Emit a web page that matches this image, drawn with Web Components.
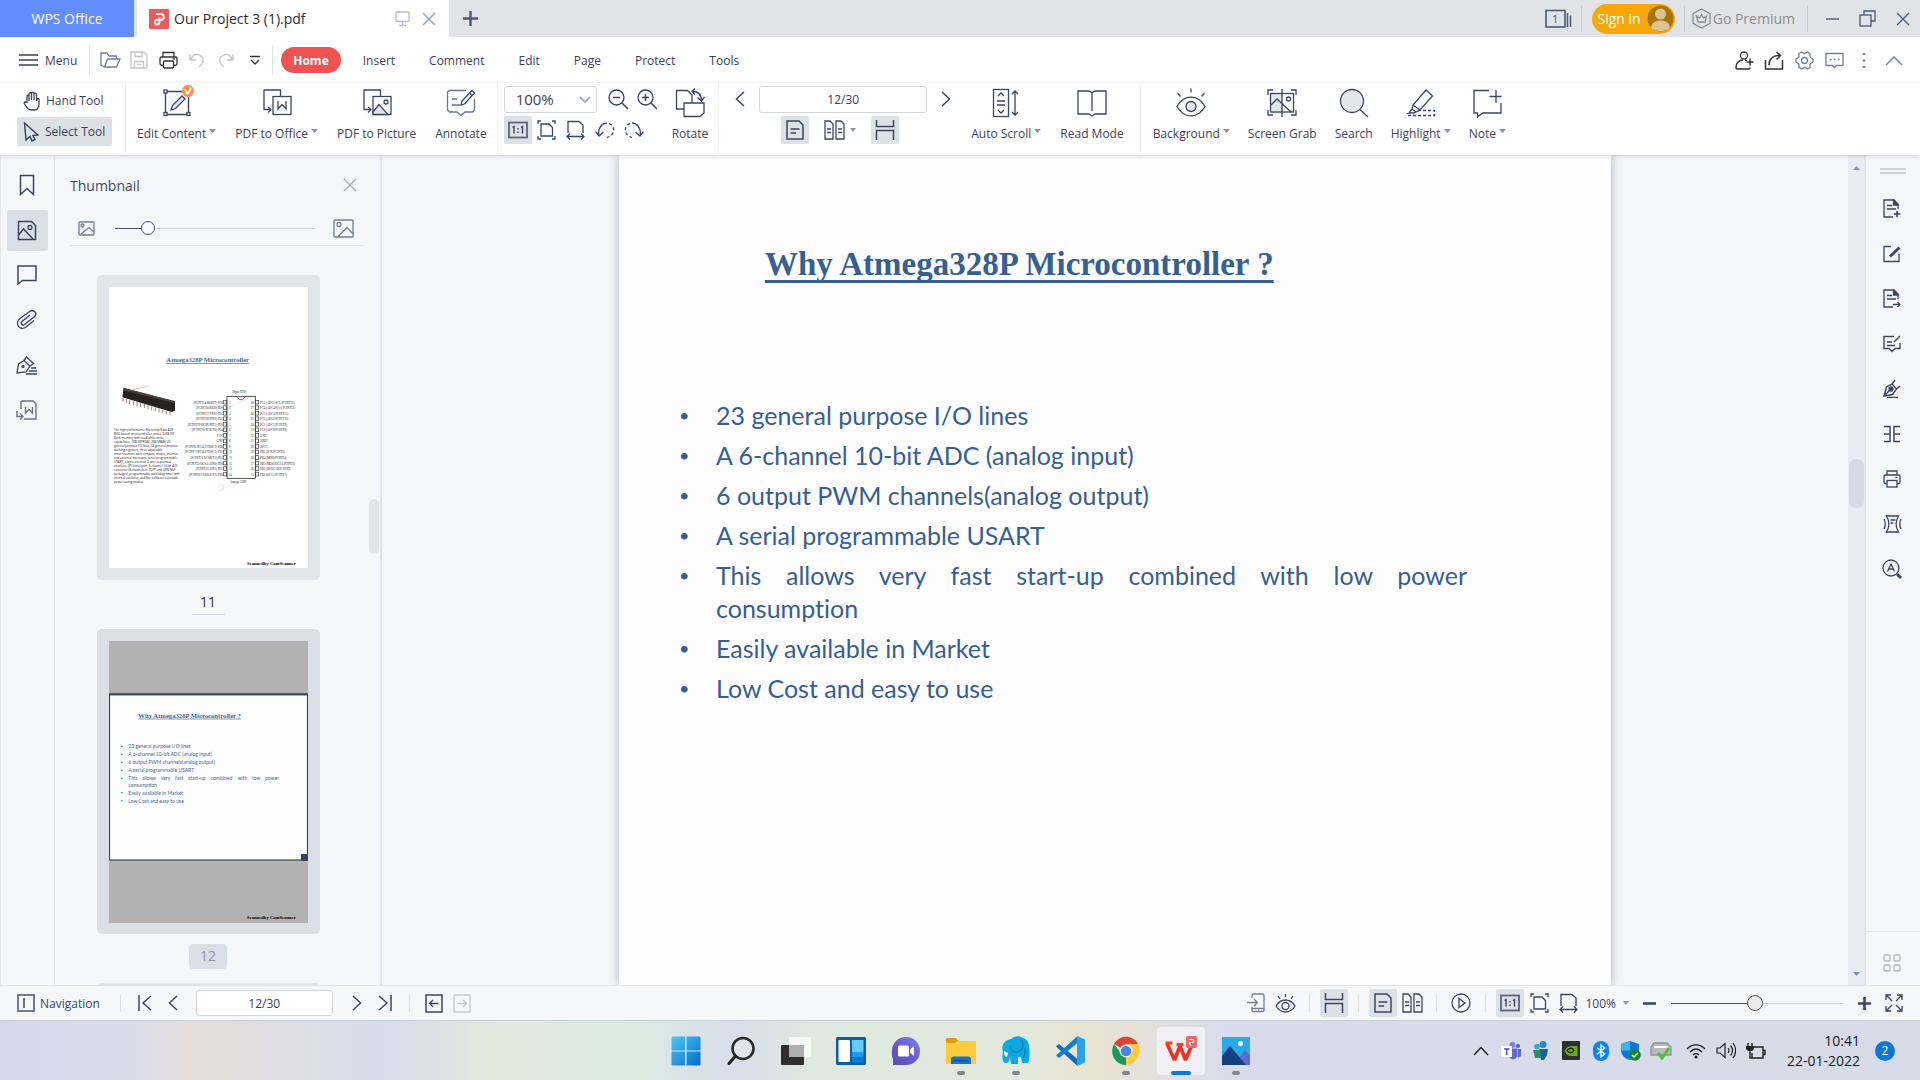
<!DOCTYPE html>
<html lang="en">
<head>
<meta charset="utf-8">
<title>Our Project 3 (1).pdf - WPS Office</title>
<style>
  html, body { height: 100%; margin: 0; }
  body { font-family: "Open Sans", "Noto Sans", sans-serif; font-size: 12px; color: #3a4258; background: #f5f7f9; overflow: hidden; }
</style>
</head>
<body>
<wps-window></wps-window>

<script>
const INK = '#3b4663';

/* name: [width, height, markup]; strokes use currentColor */
const ICONS = {
  caret: [7, 5, '<path d="M0 0h7L3.5 4z" fill="#8793b5" stroke="none"/>'],
  caretSmall: [6, 4, '<path d="M0 0h6L3 4z" fill="#8793b5" stroke="none"/>'],
  chevronDown: [12, 8, '<path d="M1 1l5 5 5-5"/>'],
  monitor: [16, 16, '<rect x="1" y="1" width="13" height="9.5" rx="1"/><path d="M7.5 11v3M4 14.5h7"/>'],
  close: [14, 14, '<path d="M1 1l12 12M13 1L1 13"/>'],
  plusBold: [15, 15, '<path d="M7.5 0v15M0 7.5h15" stroke-width="2.4"/>'],
  pdfLogo: [20, 20, '<rect width="20" height="20" rx="1" fill="#f0595b" stroke="none"/><path d="M7 5h4.500c4.500 0 4.500 6 0 6H8c-3.200 0-2.600 4.500.2 4.500 2 0 2.300-1.300 2.300-3V8" stroke="#fff" stroke-width="1.800"/>'],
  tabs: [27, 20, '<rect x="1" y="1.500" width="19" height="16.500" stroke-width="1.6"/><path d="M22.500 4v14M25.500 6.500V18" stroke-width="1.500"/>'],
  avatar: [27, 27, '<circle cx="13.500" cy="13.500" r="13" fill="#a97404" stroke="none"/><circle cx="13.500" cy="9" r="5.500" fill="#dcc493" stroke="none"/><path d="M4 22.500c.6-4.500 4.500-7 9.500-7s8.900 2.500 9.500 7c-5 5-14 5-19 0z" fill="#dcc493" stroke="none"/>'],
  premium: [19, 21, '<path d="M9.500 1l8.500 4.700v9.600L9.500 20 1 15.300V5.700z"/><path d="M4.500 8l1.400 6h7.200l1.400-6-3 2-2-3.500-2 3.500z"/>'],
  minimize: [13, 14, '<path d="M0 7h13" stroke-width="1.400"/>'],
  restore: [17, 17, '<rect x="1" y="5" width="11" height="11"/><path d="M5 5V1h11v10h-4"/>'],
  hamburger: [19, 14, '<path d="M0 2h19M0 7h19M0 12h19" stroke-width="1.500"/>'],
  open: [21, 18, '<path d="M4.500 16L1 14V2h6l2 3h7.500v3M4.500 16l3-8H20l-3.500 8z"/>'],
  save: [18, 18, '<path d="M1 1h12.500L17 4v13H1zM4.500 17v-6.500h9V17M5 1v4.500h7V1M7 13.500h4"/>'],
  print: [19, 19, '<path d="M4 6V1.500h11V6M4.500 14.500H2.500L1 13V7l1-1h15l1 1v6l-1.500 1.500h-2"/><rect x="4.500" y="10" width="10" height="7" rx="1"/><path d="M13.500 8h2.500"/>'],
  undo: [16, 16, '<path d="M1 2v6h6M1.500 8c2-6 7-7 10.500-4s2.500 8-2 11"/>'],
  redo: [16, 16, '<path d="M15 2v6H9M14.500 8c-2-6-7-7-10.500-4s-2.500 8 2 11"/>'],
  dropMore: [10, 12, '<path d="M0 2.500h10M1 6l4 4 4-4"/>'],
  addUser: [19, 19, '<circle cx="9" cy="4.500" r="3.500"/><path d="M8 9c-4 0-7 3-7 7.500 0 1 .5 1.500 1.500 1.500h11c1 0 1.500-.6 1.500-1.500M10 9l2 .5M15 7.500v7M11.500 11h7" stroke-width="1.500"/>'],
  share: [20, 19, '<path d="M1.500 9v9h17V9M5 14c0-6 4-9.500 9-9.500h2M12.500 1l4 3.500-4 4" stroke-width="1.500"/>'],
  gear: [19, 19, '<path d="M6.500 1l3 1.700L12.500 1l2.500 1.500v3.500l3 2v3l-3 2v3.500L12.500 18l-3-1.700L6.500 18 4 16.500V13l-3-2V8l3-2V2.500z"/><circle cx="9.500" cy="9.500" r="3"/>'],
  chat: [19, 17, '<path d="M1 1.500h17v12h-6.500l-2 2-2-2H1z"/><path d="M5 7.500h1.500M9 7.500h1.500M13 7.500h1.500" stroke-width="1.500"/>'],
  dots: [4, 17, '<path d="M2 1v2M2 7.500v2M2 14v2" stroke-width="2.500"/>'],
  up: [18, 11, '<path d="M1 10l8-8 8 8"/>'],
  hand: [17, 20, '<path d="M4 12V5.500c0-1.800 2-1.800 2 0V10M6 9V3c0-1.800 2.500-1.800 2.500 0v6M8.500 9V2.500c0-1.800 2.500-1.800 2.500 0V9M11 9V3.500c0-1.800 2.500-1.800 2.500 0V10l.5-1.500c.5-1.500 2.500-1 2 .8v4.200c0 3-2 5.500-4 5.500H8c-3 0-4.500-3-6.500-6-1-1.800.8-2.800 2-1.200"/>'],
  cursor: [16, 20, '<path d="M1.500 1L15 13l-5 .5 2 4-3 1.500-2-4.500L3 18z" stroke-width="1.400"/>'],
  editContent: [30, 30, '<path d="M3.500 5v19M26.500 9v15M5 3.500h15M5 26.500h20" stroke-width="1.400"/><rect x="2" y="2" width="3" height="3"/><rect x="2" y="24.500" width="3" height="3"/><rect x="25" y="24.500" width="3" height="3"/><path d="M9 22l1.500-4.500L20 8l3 3-9.500 9.500z" fill="#e3e6ea"/>'],
  badge: [12, 12, '<circle cx="6" cy="6" r="6" fill="#ff9148" stroke="none"/><path d="M3 4l2.500 5L9 3.500M7 3h2" stroke="#fff" stroke-width="1.500"/>'],
  toOffice: [30, 30, '<path d="M8.500 21.500H2V2h16.500v6"/><rect x="11" y="8.500" width="18" height="18"/><path d="M16 13v8l4-4.500 4 4.500v-8" /><path d="M6 19l3 2.500-3 3" stroke-width="1.200"/>'],
  toPicture: [30, 30, '<path d="M8.500 21.500H2V2h16.500v6"/><rect x="11" y="8.500" width="18" height="18"/><path d="M11 24l6-7.500 9 10H11z" fill="#e3e6ea"/><circle cx="24" cy="14" r="2"/><path d="M6 19l3 2.500-3 3" stroke-width="1.200"/>'],
  annotate: [30, 30, '<path d="M20 2.500H3.500L1.500 4v18l2 2H11l4 3.500 4-3.500h7.500l2-2V11" stroke="#6b7489"/><path d="M6 11h5M6 17h8" stroke="#6b7489"/><path d="M15 17l1-4L26 2.500l2.500 2.500L18.500 16z"/><path d="M23.500 5l2.500 2.500"/>'],
  zoomOut: [20, 21, '<circle cx="8.500" cy="8.500" r="7.500"/><path d="M14 14l6 6M5 8.500h7" stroke-width="1.500"/>'],
  zoomIn: [20, 21, '<circle cx="8.500" cy="8.500" r="7.500"/><path d="M14 14l6 6M5 8.500h7M8.500 5v7" stroke-width="1.500"/>'],
  actual: [20, 18, '<rect x="1" y="1.500" width="18" height="15" stroke="#5b657d" stroke-width="1.800"/><path d="M4.500 6.500L6 5.500v7M13 6.500l1.500-1v7M10 7v1.500M10 10.500V12" stroke-width="1.400"/>'],
  fitPage: [19, 20, '<path d="M4 4h8l3.500 3.500V16H4zM1 4V1h3M15 1h3v3M18 16v3h-3M4 19H1v-3"/>'],
  fitWidth: [19, 20, '<path d="M2 13V1.500h11L17 5v8M1 16.500h17M4 13.500l-3 3 3 3M15 13.500l3 3-3 3"/>'],
  rotateL: [20, 18, '<path d="M4 15c-1.500-7 2-12.500 8-13"/><path d="M0.500 10.500L4 15l4.500-4"/><path d="M14 2.500c7 3 6 12-2 14" stroke-dasharray="3 2.500"/>'],
  rotateR: [20, 18, '<path d="M16 15c1.500-7-2-12.500-8-13"/><path d="M19.500 10.500L16 15l-4.500-4"/><path d="M6 2.500c-7 3-6 12 2 14" stroke-dasharray="3 2.500"/>'],
  rotate: [30, 30, '<path d="M9 21H1.500V2.500h11L17 7v8"/><path d="M9 15h20v10l-4 3.500H9z"/><path d="M17 3.500c6-.5 9 2.500 9.500 9M20 .5l-3 3 3 3M22.500 9.500l4 3.500 3-4" stroke-width="1.400"/>'],
  prev: [10, 16, '<path d="M9 1L1.500 8 9 15" stroke-width="1.500"/>'],
  next: [10, 16, '<path d="M1 1l7.500 7L1 15" stroke-width="1.500"/>'],
  first: [14, 16, '<path d="M1 0v16M13 1L5 8l8 7" stroke-width="1.500"/>'],
  last: [14, 16, '<path d="M13 0v16M1 1l8 7-8 7" stroke-width="1.500"/>'],
  single: [18, 20, '<path d="M1 1h12l4 4v14H1zM4.500 9h9M4.500 13h5.500" stroke-width="1.500"/>'],
  double: [21, 20, '<path d="M1 1h5l3 3v15H1zM12 1h5l3 3v15h-8zM3 9h4M3 12.500h4M14 9h4M14 12.500h4"/>'],
  continuous: [20, 20, '<path d="M1.500 0v6.500h17V0M1.500 20v-9.500h17V20" stroke-width="1.500"/>'],
  autoScroll: [30, 30, '<rect x="2.500" y="1.500" width="15" height="27"/><path d="M7 8l3-3 3 3M7 22l3 3 3-3M6 13h8M6 17h8M24 3v24M21 6l3-3 3 3M21 24l3 3 3-3"/>'],
  read: [30, 30, '<path d="M15 5v18M15 5c-1-1.500-2-2-4-2H1v23h11l3 2 3-2h11V3H19c-2 0-3 .5-4 2z"/>'],
  eye: [30, 30, '<path d="M1 18.500C8 6 22 6 29 18.500 22 31 8 31 1 18.500z"/><circle cx="15" cy="18.500" r="5" fill="#e3e6ea"/><path d="M15 .5v4M1.500 5l3 3.500M28.500 5l-3 3.500"/>'],
  grab: [30, 30, '<rect x="3.500" y="5.500" width="12" height="20" fill="#e3e6ea" stroke="none"/><path d="M1 7V2h5M24 2h5v5M29 22v5h-5M6 27H1v-5"/><rect x="3.500" y="5.500" width="23" height="18.500"/><path d="M15 1v28M4 17l6-6 14 13M4 17l6-6"/><circle cx="21.500" cy="11" r="2"/>'],
  search: [30, 30, '<circle cx="13" cy="13" r="11.500" fill="#e3e6ea"/><path d="M21 21.500l8 7.500"/>'],
  highlight: [30, 30, '<path d="M7 17L20 2l6.500 6L14 22zM7 17l-1 4 4 3 4-2M6 21l-3 4h5l2-1"/><path d="M12 22.500h16.500v5H1.500V25" stroke-dasharray="3 2"/>'],
  note: [30, 30, '<path d="M17 2.500H2V25h3.500v4l5-4H29V15M24 2v13M17.500 8.500h12"/>'],
  bookmark: [16, 22, '<path d="M1.500 1.500h13v19L8 14.500l-6.500 6z" stroke-width="1.500"/>'],
  image: [20, 21, '<path d="M1.500 1.500h13l4 4v14h-17zM1.500 15L6.500 9l10 10.500" stroke-width="1.500"/><circle cx="13" cy="7.500" r="2"/>'],
  imgSmall: [17, 15, '<rect x="1" y="1" width="15" height="13" rx="1"/><circle cx="4.500" cy="4.500" r="1.500"/><path d="M3 13l8-6.500 5 4.500"/>'],
  imgLarge: [21, 19, '<rect x="1" y="1" width="19" height="17" rx="1"/><circle cx="6" cy="5.500" r="2"/><path d="M5 17.500l9-9 6 6.500"/>'],
  bubble: [20, 20, '<path d="M1 1h18v14.500H5.500L1 19z" stroke-width="1.500"/>'],
  clip: [22, 20, '<path d="M14 5l-8 6.500c-2 2 0 4.500 2.500 3L18 7c5-4-1-8-5-5L4 8.500c-6 5 0 13 6 8.500l8-6.500" stroke-width="1.400"/>'],
  sign: [21, 19, '<path d="M1 17L2.500 8 8 4.500l6 5.500-4 6zM8 4.500L10.500 1l7 6.500L14 10"/><circle cx="7" cy="10.500" r="1"/><path d="M15 12h5M13 15h8M10 18h11"/>'],
  exportW: [21, 20, '<path d="M5 9V1.500L6 1h11l3 2.500V19H8M9.500 7v6l3.500-3.500 3.500 3.500V7M1 11v5.500h6M4 13.500l3 3-3 3" stroke="#6a748b" stroke-width="1.400"/>'],
  handle: [26, 6, '<path d="M0 1h26M0 5h26" stroke="#c5c8cd"/>'],
  pageAdd: [18, 19, '<path d="M10 18H1V1h10l4 4v5M4 6.500h5M4 10h9"/><path d="M10.500 1v5H15z" fill="#3b4663"/><path d="M14 12v6M11 15h6.500" stroke-width="1.600"/>'],
  pageEdit: [18, 18, '<path d="M8 1.500H1v15h15V9"/><path d="M7 11.500L16.500 2.500" stroke-width="2.800"/>'],
  pageOut: [18, 19, '<path d="M10 18H1V1h10l4 4v5M4 6.500h5M4 10h9"/><path d="M10.500 1v5H15z" fill="#3b4663"/><path d="M10 15.500h7M14.500 13l2.500 2.500-2.500 2.500"/>'],
  review: [18, 18, '<path d="M11 1.500H1v12h5l3 3 3-3h5V8M4 7h5M4 10.500h8M11 7l6-6" stroke-width="1.400"/>'],
  pen: [18, 19, '<path d="M1 17l2.500-9L9 5l4.500 5-4 5.500zM9 5l3-4M13.500 10L17 7M1 17l6-6M4 18.500h11" stroke-width="1.400"/><circle cx="8" cy="10" r="2" fill="#3b4663"/>'],
  compare: [18, 18, '<path d="M1 1.500h6v15H1M1 9h6M17 1.500h-6v15h6M11 9h6" stroke-width="1.500"/>'],
  printer: [18, 18, '<path d="M4 5V1h10v4"/><rect x="1" y="5" width="16" height="8.500" rx="1.500"/><rect x="4" y="10.500" width="10" height="6.500" fill="#f5f7f9"/><path d="M12.500 7.500h2"/>'],
  compress: [19, 18, '<path d="M3.500 1h12c-3 5-3 11 0 16h-12c3-5 3-11 0-16zM1 4c1.500 3 1.500 7 0 10M18 4c-1.500 3-1.500 7 0 10M7.500 5h5M7.500 8h3"/>'],
  ocr: [20, 20, '<circle cx="9" cy="9" r="8"/><path d="M5.500 12.500L9 5l3.500 7.500M7 10h4"/><path d="M15 15l4 4" stroke-width="3"/>'],
  grid: [18, 18, '<rect x="1" y="1" width="6" height="6" rx="1"/><rect x="11" y="1" width="6" height="6" rx="1"/><rect x="1" y="11" width="6" height="6" rx="1"/><rect x="11" y="11" width="6" height="6" rx="1"/>'],
  nav: [18, 18, '<rect x="1" y="1" width="16" height="16" stroke="#626c85" stroke-width="1.800"/><path d="M7 4v10" stroke-width="1.500"/>'],
  back: [18, 19, '<rect x="1" y="1" width="16" height="17" stroke-width="1.500"/><path d="M4.500 9.500h9M8 6L4.500 9.500 8 13"/>'],
  fwd: [18, 19, '<rect x="1" y="1" width="16" height="17"/><path d="M13.500 9.500h-9M10 6l3.500 3.500L10 13"/>'],
  phone: [18, 20, '<path d="M5 5V2l1-1h10l1 1v15.500l-1 1H6l-1-1V14M0 9.500h10M7 6l3.500 3.500L7 13M5 15.500h12M11 17h.5"/>'],
  eyeSmall: [21, 19, '<path d="M1 12C6 4 15 4 20 12c-5 8-14 8-19 0z"/><circle cx="10.500" cy="12" r="3.500"/><path d="M10.500 0v3M3 2l2 3M18 2l-2 3"/>'],
  play: [20, 20, '<circle cx="10" cy="10" r="9"/><path d="M8 5.500l6 4.500-6 4.500z"/>'],
  minus: [13, 13, '<path d="M0 6.500h13" stroke-width="2.600"/>'],
  plus: [13, 13, '<path d="M0 6.500h13M6.500 0v13" stroke-width="2.600"/>'],
  expand: [18, 18, '<path d="M7 7L1.500 1.500M1 6V1h5M11 7l5.500-5.500M12 1h5v5M7 11l-5.500 5.500M1 12v5h5M11 11l5.500 5.500M17 12v5h-5"/>'],
  scrollUp: [7, 5, '<path d="M0 4h7L3.500 0z" fill="#8793b5" stroke="none"/>'],

  start: [30, 30, '<defs><linearGradient id="g" x2="1" y2="1"><stop stop-color="#4cc9f8"/><stop offset="1" stop-color="#0668c9"/></linearGradient></defs><path d="M.5 1.500L1.500.5H14v14H.500zM15.500.5H28.500l1 1v13h-14zM.5 15.500H14v14H1.500l-1-1zM15.500 15.500h14v13l-1 1h-13z" fill="url(#g)" stroke="none"/>'],
  taskSearch: [28, 30, '<circle cx="16" cy="12.500" r="10.500" stroke="#2a2a2a" stroke-width="2.600" fill="#e4eaf2" fill-opacity=".6"/><path d="M8.500 20l-6.500 7.500" stroke="#222" stroke-width="3" stroke-linecap="round"/>'],
  taskView: [30, 30, '<rect y="9" width="23" height="20" rx="1" fill="#2e2e2c" stroke="none"/><rect x="8" y="1" width="22" height="20" rx="1" fill="#fff" fill-opacity=".75" stroke="none"/><rect x="8" y="9" width="15" height="12" fill="#aeb0af" stroke="none"/>'],
  widgets: [30, 30, '<rect y="1" width="30" height="28" rx="1.500" fill="#0b5cab" stroke="none"/><rect x="2.500" y="4" width="11.500" height="22" rx="1" fill="#fff" stroke="none"/><rect x="16" y="4" width="11.500" height="12" fill="#64cbfb" stroke="none"/><rect x="16" y="16" width="11.500" height="5" fill="#1f9bf0" stroke="none"/><rect x="16" y="21.500" width="11.500" height="5" fill="#0f78d4" stroke="none"/>'],
  teamsChat: [30, 30, '<defs><linearGradient id="g" x1="1" y1="0" x2="0" y2="1"><stop stop-color="#7d85e6"/><stop offset=".5" stop-color="#6a5ccf"/><stop offset="1" stop-color="#5b4bb0"/></linearGradient></defs><path d="M15 1c8 0 14 6 14 14s-6 14-14 14H2V23C.5 20 .8 17 1 15 1 7 7 1 15 1z" fill="url(#g)" stroke="none"/><rect x="7" y="9.500" width="11" height="11" rx="1.500" fill="#fff" stroke="none"/><path d="M19 13.500l4-3.500v10l-4-3.500z" fill="#fff" stroke="none"/>'],
  folder: [30, 30, '<path d="M0 3l1-1h9l3 3.500h-2L9 8H0z" fill="#dd9f09" stroke="none"/><path d="M0 7h10l3-2h16l1 1v22H0z" fill="#ffcb3a" stroke="none"/><path d="M5 28v-6l2-1.500h16l2 1.500v6z" fill="#1374d0" stroke="none"/><path d="M8 24.500h14" stroke="#0a4e9c" stroke-width="1.500"/>'],
  elephant: [30, 31, '<path d="M10 4c3-3 8-4 12-1 4 1 6 5 6 9 1 5 1 10-1 16h-6l-1-6h-3v7h-7l-1-7c-1 3-1 6-4 6-4 0-4-7-3-11C0 11 3 5 10 4z" fill="#08a9e4" stroke="none"/><path d="M9 10c0 6 5 9 10 6 3-2 3-7 2-11M24 12c1 4 0 8-2 11" stroke="#047bb5"/><path d="M3 16l4 2-1 4c-2 1-3-3-3-6z" fill="#fff" stroke="none"/>'],
  vscode: [30, 30, '<path d="M0 10.500L3 8l18.500 15V30z" fill="#0d6fb8" stroke="none"/><path d="M0 19.500L3 22 21.500 7V0z" fill="#1180cc" stroke="none"/><path d="M21 0l8 3.500v23L21 30z" fill="#29a0f2" stroke="none"/>'],
  chrome: [30, 30, '<path d="M15 15L3 8C9-2 22-1 27 8z" fill="#dc4437" stroke="none"/><path d="M15 15L27 8c5 9-1 20-12 21z" fill="#fecb40" stroke="none"/><path d="M15 15v14C4 29-2 18 3 8l7 9z" fill="#169b5a" stroke="none"/><path d="M15 8h12c4 9-1 20-12 21l6-11z" fill="#fecb40" stroke="none"/><circle cx="15" cy="15" r="6.500" fill="#fff" stroke="none"/><circle cx="15" cy="15" r="5.200" fill="#4885ed" stroke="none"/>'],
  wps: [34, 32, '<path d="M3 8.500L10.500 25 16 11 21.500 25 28 9.500" stroke="#f2301b" stroke-width="3.600" stroke-linejoin="bevel"/><path d="M1.500 8h7M12.500 9.500h7" stroke="#ff4022" stroke-width="3"/><rect x="22" y="1" width="11" height="12" rx="2" fill="#ef6467" stroke="none"/><path d="M25 4.500h3c2.500 0 2.500 3 0 3h-2c-1.500 2 1.500 2 .5 3" stroke="#fff" stroke-width="1.200"/>'],
  photos: [28, 30, '<path d="M0 1h28v28H0z" fill="#27a9ea" stroke="none"/><path d="M17 22l6-8 5 6v9H17z" fill="#5a6bd0" stroke="none"/><path d="M0 20l8-10 16 19H0z" fill="#15417f" stroke="none"/><circle cx="18.500" cy="7.500" r="2.500" fill="#fff" stroke="none"/>'],
  trayUp: [16, 10, '<path d="M1 9l7-7.500L15 9" stroke="#222" stroke-width="1.500"/>'],
  trayTeams: [20, 18, '<circle cx="11.500" cy="3" r="3" fill="#7b83eb" stroke="none"/><circle cx="17" cy="4" r="2" fill="#5059c9" stroke="none"/><path d="M8 6.500h8v7c0 5-8 5-8 0zM16.500 7H20v6c0 2-2 3-3.500 2z" fill="#5f67d3" stroke="none"/><rect y="4" width="11" height="11" fill="#fff" stroke="none"/><path d="M3 7h5.500M5.700 7v6" stroke="#4b53bc" stroke-width="1.600"/>'],
  trayPeople: [16, 19, '<circle cx="10" cy="3.500" r="3.500" fill="#1c8fc0" stroke="none"/><path d="M6 8h9l-1 6-3 5H8z" fill="#17658b" stroke="none"/><circle cx="4" cy="5.500" r="2.800" fill="#36a9c9" stroke="none"/><path d="M0 9h7l1 8H2z" fill="#2b8f6f" stroke="none"/>'],
  nvidia: [18, 19, '<rect width="18" height="19" rx="1" fill="#2c2f2b" stroke="none"/><path d="M2.500 9.500C5 5 9 5 9 5h6.500v10H9c-4 0-6-3.500-6.500-5.500z" fill="#6fa81b" stroke="none"/><path d="M5 9.500c2-3 6-3 7 0-2 3-5 3-7 0z" stroke="#1b260b"/>'],
  bluetooth: [16, 20, '<rect width="16" height="20" rx="8" fill="#0a84f5" stroke="none"/><path d="M4 6.500l7.500 6.500L8 16V4l3.500 3L4 13.500" stroke="#fff" stroke-width="1.300"/>'],
  shield: [20, 20, '<path d="M9 0l9 3v6c0 5-4 9-9 10-5-1-9-5-9-10V3z" fill="#0b79cf" stroke="none"/><path d="M9 0v9.500H0V3z" fill="#38b6f1" stroke="none"/><circle cx="14" cy="14" r="5.800" fill="#12862b" stroke="none"/><path d="M11 14l2 2 4-4" stroke="#fff" stroke-width="1.400"/>'],
  trayPrinter: [22, 19, '<path d="M4 2h13l4 4v8H1V6z" fill="#b8bbbd" stroke="#8f9396"/><path d="M4 6h14" stroke="#fff" stroke-width="2"/><path d="M8 12l4 5 7-10" stroke="#4bc32e" stroke-width="3"/>'],
  wifi: [20, 16, '<path d="M1 6C6 .5 14 .5 19 6M4 9c4-4 8-4 12 0M7 12c2-2 4-2 6 0" stroke="#222" stroke-width="1.400"/><circle cx="10" cy="14" r="1.500" fill="#222" stroke="none"/>'],
  sound: [20, 17, '<path d="M1 6h3l5-4.500v14L4 11H1zM12 6c1.200 1.500 1.200 3.500 0 5M14.500 3.500c2.500 3 2.500 7 0 10M17 1c3.500 4.500 3.500 10.500 0 15" stroke="#222" stroke-width="1.200"/>'],
  battery: [20, 18, '<path d="M8 5h9v11H6v-5M17 8.500h2v4h-2M4 9v7h4M2 1v3M6 1v3" stroke="#222" stroke-width="1.400"/><path d="M0 4h8v3L6 9H2L0 7z" fill="#222" stroke="none"/>']
};

/* Registers an element whose shadow root is cloned from one template */
function define(name, css, html, ready) {
  const template = document.createElement('template');
  template.innerHTML = `<style>*{box-sizing:border-box}${css}</style>${html}`;
  customElements.define(name, class extends HTMLElement {
    constructor() {
      super();
      this.attachShadow({ mode: 'open' }).append(template.content.cloneNode(true));
    }
    connectedCallback() { if (ready) ready.call(this, this.shadowRoot); }
  });
}

customElements.define('ui-icon', class extends HTMLElement {
  connectedCallback() {
    if (this.shadowRoot) return;
    const [w, h, body] = ICONS[this.getAttribute('name')];
    this.attachShadow({ mode: 'open' }).innerHTML =
      `<style>:host{display:inline-flex;flex:none}svg{display:block}</style>
       <svg width="${w}" height="${h}" viewBox="0 0 ${w} ${h}" fill="none" stroke="currentColor" stroke-width="1.300" aria-hidden="true">${body}</svg>`;
  }
});

const RESET = 'button{font:inherit;color:inherit;background:none;border:0;padding:0;margin:0}';

define('icon-button', `
  :host{display:inline-flex;flex:none;color:${INK}}
  ${RESET}
  button{display:flex;align-items:center;justify-content:center;gap:5px;min-width:28px;height:28px;border-radius:2px}
  :host([active]) button{background:#dce1e6}
  :host([faint]){color:#c3c5c9}
  :host([dark]){color:#333}
  :host([soft]){color:#737d93}
`, `<button type="button"><slot></slot></button>`, function (root) {
  root.querySelector('button').setAttribute('aria-label', this.getAttribute('label') || '');
});

define('tool-button', `
  :host{display:inline-flex;flex:none;color:${INK}}
  ${RESET}
  button{display:flex;flex-direction:column;align-items:center;gap:7px;padding:5px 8px 0}
  .icon{position:relative;display:flex;height:30px;align-items:center}
  .label{display:flex;gap:3px;line-height:18px;white-space:nowrap;color:#3a4258}
  .label ui-icon{display:none;padding-top:4px}
  :host([menu]) .label ui-icon{display:inline-flex}
  ::slotted([slot=badge]){position:absolute;top:-3px;right:-2px}
`, `<button type="button"><span class="icon"><slot name="icon"></slot><slot name="badge"></slot></span><span class="label"><slot></slot><ui-icon name="caret"></ui-icon></span></button>`);

define('wps-title-bar', `
  :host{display:flex;flex:none;align-items:stretch;height:37px;background:#e2e3e7;font-size:14px;color:#4d587a}
  ${RESET}
  .home{width:134px;background:#638dfc;color:#fff;margin-right:3px}
  .tab{display:flex;align-items:center;width:312px;background:#fff;padding:0 13px 0 12px;color:#272c36}
  .tab span{flex:1;padding-left:5px}
  .tab button{display:flex;margin-left:11px;color:#8f9bbd}
  .tab button:first-of-type{color:#b3bcd8}
  .add{display:flex;align-items:center;padding:0 14px}
  .right{display:flex;align-items:center;margin-left:auto;padding-right:10px}
  i{width:1px;height:26px;background:#c9cbd1}
  .count{position:relative;display:flex;margin-right:9px}
  .count b{position:absolute;left:0;top:0;width:21px;line-height:19px;text-align:center;font-weight:400;font-size:11px}
  .sign{display:flex;align-items:center;gap:6px;height:30px;margin:0 9px 0 10px;padding:0 1px 0 6px;border-radius:15px;background:#f7a70a;color:#fff}
  .premium{display:flex;align-items:center;gap:2px;margin:0 12px 0 7px;color:#8b8d92}
  .win{display:flex;align-items:center;gap:20px;padding-left:18px}
  .win button{display:flex}
`, `
  <button class="home">WPS Office</button>
  <div class="tab"><ui-icon name="pdfLogo"></ui-icon><span>Our Project 3 (1).pdf</span><button aria-label="Present"><ui-icon name="monitor"></ui-icon></button><button aria-label="Close tab"><ui-icon name="close"></ui-icon></button></div>
  <button class="add" aria-label="New tab"><ui-icon name="plusBold"></ui-icon></button>
  <div class="right">
    <button class="count"><ui-icon name="tabs"></ui-icon><b>1</b></button><i></i>
    <button class="sign">Sign in<ui-icon name="avatar"></ui-icon></button><i></i>
    <button class="premium"><ui-icon name="premium"></ui-icon>Go Premium</button><i></i>
    <div class="win">
      <button aria-label="Minimize"><ui-icon name="minimize"></ui-icon></button>
      <button aria-label="Restore"><ui-icon name="restore"></ui-icon></button>
      <button aria-label="Close"><ui-icon name="close"></ui-icon></button>
    </div>
  </div>`);

define('wps-menu-bar', `
  :host{display:flex;flex:none;align-items:center;height:46px;background:#fff;padding:0 12px 0 19px}
  ${RESET}
  i{width:1px;height:30px;background:#dfe1e4}
  .menu{display:flex;align-items:center;gap:7px;margin-right:12px}
  .quick{display:flex;align-items:center;gap:1px;padding:0 3px 0 6px}
  nav{display:flex;align-items:center;gap:34px;padding-left:8px}
  nav button{padding-top:1px}
  .home{height:26px;padding:0 12px;border-radius:13px;background:#ee5351;color:#fff;font-weight:700;margin-right:-12px}
  .right{display:flex;gap:2px;margin-left:auto}
`, `
  <button class="menu"><ui-icon name="hamburger"></ui-icon>Menu</button><i></i>
  <div class="quick">
    <icon-button label="Open" soft><ui-icon name="open"></ui-icon></icon-button>
    <icon-button label="Save" faint><ui-icon name="save"></ui-icon></icon-button>
    <icon-button label="Print" dark><ui-icon name="print"></ui-icon></icon-button>
    <icon-button label="Undo" faint><ui-icon name="undo"></ui-icon></icon-button>
    <icon-button label="Redo" faint><ui-icon name="redo"></ui-icon></icon-button>
    <icon-button label="More commands" dark><ui-icon name="dropMore"></ui-icon></icon-button>
  </div><i></i>
  <nav><button class="home">Home</button><button>Insert</button><button>Comment</button><button>Edit</button><button>Page</button><button>Protect</button><button>Tools</button></nav>
  <div class="right">
    <icon-button label="Add user" dark><ui-icon name="addUser"></ui-icon></icon-button>
    <icon-button label="Share" dark><ui-icon name="share"></ui-icon></icon-button>
    <icon-button label="Settings" soft><ui-icon name="gear"></ui-icon></icon-button>
    <icon-button label="Feedback" soft><ui-icon name="chat"></ui-icon></icon-button>
    <icon-button label="More" soft><ui-icon name="dots"></ui-icon></icon-button>
    <icon-button label="Collapse ribbon" soft><ui-icon name="up"></ui-icon></icon-button>
  </div>`);

define('wps-tool-bar', `
  :host{display:flex;flex:none;height:72px;background:#fff;padding-left:17px;position:relative;z-index:2;box-shadow:0 1px 4px rgba(60,70,90,.22)}
  ${RESET}
  i{flex:none;width:1px;height:70px;background:#edeff1}
  .modes{display:flex;flex-direction:column;width:95px;padding-top:3px;gap:2px;margin-right:13px}
  .modes button{display:flex;align-items:center;gap:6px;height:29px;padding-left:6px;border-radius:2px;white-space:nowrap}
  .modes .on{background:#dce1e6}
  .group{display:flex;gap:3px;padding:0 2px 0 3px}
  .group.view{padding-left:6px}
  .group.pages{padding:0 8px 0 7px}
  .group.last{gap:2px;padding-left:4px}
  .stack{display:flex;flex-direction:column;gap:3px;padding-top:2px}
  .row{display:flex;align-items:center;gap:1px}
  .zoom{position:relative;margin-right:6px;color:#8793a8}
  .zoom ui-icon{position:absolute;right:6px;top:10px;pointer-events:none}
  select,input{font:inherit;color:#3a4258;background:#fff;border:1px solid #d3d6db;border-radius:3px;height:27px}
  select{appearance:none;width:93px;font-size:15px;padding:0 0 0 11px;display:block}
  input{width:168px;text-align:center;padding:0;margin:0 4px}
  .layout{justify-content:center;gap:15px;padding-right:6px}
`, `
  <div class="modes"><button><ui-icon name="hand"></ui-icon>Hand Tool</button><button class="on"><ui-icon name="cursor"></ui-icon>Select Tool</button></div><i></i>
  <div class="group">
    <tool-button menu><ui-icon slot="icon" name="editContent"></ui-icon><ui-icon slot="badge" name="badge"></ui-icon>Edit Content</tool-button>
    <tool-button menu><ui-icon slot="icon" name="toOffice"></ui-icon>PDF to Office</tool-button>
    <tool-button><ui-icon slot="icon" name="toPicture"></ui-icon>PDF to Picture</tool-button>
    <tool-button><ui-icon slot="icon" name="annotate"></ui-icon>Annotate</tool-button>
  </div><i></i>
  <div class="group view">
    <div class="stack">
      <div class="row"><div class="zoom"><select aria-label="Zoom"><option>100%</option></select><ui-icon name="chevronDown"></ui-icon></div><icon-button label="Zoom out"><ui-icon name="zoomOut"></ui-icon></icon-button><icon-button label="Zoom in"><ui-icon name="zoomIn"></ui-icon></icon-button></div>
      <div class="row"><icon-button label="Actual size" active><ui-icon name="actual"></ui-icon></icon-button><icon-button label="Fit page"><ui-icon name="fitPage"></ui-icon></icon-button><icon-button label="Fit width"><ui-icon name="fitWidth"></ui-icon></icon-button><icon-button label="Rotate left"><ui-icon name="rotateL"></ui-icon></icon-button><icon-button label="Rotate right"><ui-icon name="rotateR"></ui-icon></icon-button></div>
    </div>
    <tool-button><ui-icon slot="icon" name="rotate"></ui-icon>Rotate</tool-button>
  </div><i></i>
  <div class="group pages">
    <div class="stack">
      <div class="row"><icon-button label="Previous page"><ui-icon name="prev"></ui-icon></icon-button><input aria-label="Page" value="12/30"><icon-button label="Next page"><ui-icon name="next"></ui-icon></icon-button></div>
      <div class="row layout"><icon-button label="Single page" active><ui-icon name="single"></ui-icon></icon-button><icon-button label="Two pages"><ui-icon name="double"></ui-icon><ui-icon name="caretSmall"></ui-icon></icon-button><icon-button label="Continuous" active><ui-icon name="continuous"></ui-icon></icon-button></div>
    </div>
    <tool-button menu><ui-icon slot="icon" name="autoScroll"></ui-icon>Auto Scroll</tool-button>
    <tool-button><ui-icon slot="icon" name="read"></ui-icon>Read Mode</tool-button>
  </div><i></i>
  <div class="group last">
    <tool-button menu><ui-icon slot="icon" name="eye"></ui-icon>Background</tool-button>
    <tool-button><ui-icon slot="icon" name="grab"></ui-icon>Screen Grab</tool-button>
    <tool-button><ui-icon slot="icon" name="search"></ui-icon>Search</tool-button>
    <tool-button menu><ui-icon slot="icon" name="highlight"></ui-icon>Highlight</tool-button>
    <tool-button menu><ui-icon slot="icon" name="note"></ui-icon>Note</tool-button>
  </div>`);

define('side-rail', `
  :host{display:flex;flex:none;flex-direction:column;align-items:center;width:55px;background:#f5f7f9;border-left:1px solid #e2e4ea;border-right:1px solid #e2e4ea;padding:10px 6px 0;gap:4px;color:${INK}}
  ${RESET}
  button{display:flex;align-items:center;justify-content:center;width:41px;height:41px;padding:0 2px 1px 0;border-radius:2px;flex:none}
  .on{background:#dadfe6}
`, `
  <button aria-label="Bookmarks"><ui-icon name="bookmark"></ui-icon></button>
  <button class="on" aria-label="Thumbnails"><ui-icon name="image"></ui-icon></button>
  <button aria-label="Comments"><ui-icon name="bubble"></ui-icon></button>
  <button aria-label="Attachments"><ui-icon name="clip"></ui-icon></button>
  <button aria-label="Signatures"><ui-icon name="sign"></ui-icon></button>
  <button aria-label="Convert"><ui-icon name="exportW"></ui-icon></button>`);

define('tool-rail', `
  :host{display:flex;flex:none;flex-direction:column;align-items:center;width:56px;background:#f5f7f9;border-left:2px solid #e2e4ea;color:${INK}}
  ${RESET}
  .handle{display:flex;padding:13px 0 12px}
  button{display:flex;align-items:center;justify-content:center;width:45px;height:45px;padding-right:2px;flex:none}
  .more{margin-top:auto;width:100%;height:54px;padding-top:8px;border-top:1px solid #e2e4ea;color:#b4b8c0}
`, `
  <span class="handle"><ui-icon name="handle"></ui-icon></span>
  <button aria-label="Insert page"><ui-icon name="pageAdd"></ui-icon></button>
  <button aria-label="Edit"><ui-icon name="pageEdit"></ui-icon></button>
  <button aria-label="Export"><ui-icon name="pageOut"></ui-icon></button>
  <button aria-label="Review"><ui-icon name="review"></ui-icon></button>
  <button aria-label="Sign"><ui-icon name="pen"></ui-icon></button>
  <button aria-label="Compare"><ui-icon name="compare"></ui-icon></button>
  <button aria-label="Print"><ui-icon name="printer"></ui-icon></button>
  <button aria-label="Compress"><ui-icon name="compress"></ui-icon></button>
  <button aria-label="Find text"><ui-icon name="ocr"></ui-icon></button>
  <button class="more" aria-label="All tools"><ui-icon name="grid"></ui-icon></button>`);

/* Thumbnail frame: picture in the default slot, page number below */
define('page-thumb', `
  :host{display:flex;flex-direction:column;align-items:center;flex:none;height:354px}
  .card{width:223px;height:305px;padding:12px;border-radius:5px;background:#e1e4e9;flex:none}
  :host([current]) .card{background:#dadfe6}
  .num{margin-top:10px;min-width:33px;height:25px;line-height:24px;text-align:center;font-size:14px;color:#2d3553;border-bottom:1px solid #d5d9e6}
  :host([current]) .num{min-width:38px;color:#8b94a6;background:#dadfe6;border:0;border-radius:4px}
`, `<div class="card"><slot></slot></div>`, function (root) {
  const number = this.getAttribute('number');
  if (!number) return;
  const label = document.createElement('div');
  label.className = 'num';
  label.textContent = number;
  root.append(label);
});

const leftPins = ['(PCINT14/RESET) PC6','(PCINT16/RXD) PD0','(PCINT17/TXD) PD1','(PCINT18/INT0) PD2','(PCINT19/OC2B/INT1) PD3','(PCINT20/XCK/T0) PD4','VCC','GND','(PCINT6/XTAL1/TOSC1) PB6','(PCINT7/XTAL2/TOSC2) PB7','(PCINT21/OC0B/T1) PD5','(PCINT22/OC0A/AIN0) PD6','(PCINT23/AIN1) PD7','(PCINT0/CLKO/ICP1) PB0'];
const rightPins = ['PC5 (ADC5/SCL/PCINT13)','PC4 (ADC4/SDA/PCINT12)','PC3 (ADC3/PCINT11)','PC2 (ADC2/PCINT10)','PC1 (ADC1/PCINT9)','PC0 (ADC0/PCINT8)','GND','AREF','AVCC','PB5 (SCK/PCINT5)','PB4 (MISO/PCINT4)','PB3 (MOSI/OC2A/PCINT3)','PB2 (SS/OC1B/PCINT2)','PB1 (OC1A/PCINT1)'];
const blurb = ['The high performance Microchip 8-bit AVR','RISC-based microcontroller unites 32KB ISP','flash memory with read-while-write','capabilities, 1KB EEPROM, 2KB SRAM, 23','general purpose I/O lines, 32 general purpose','working registers, three adjustable','timer/counters with compare modes, internal','and external interrupts, serial programmable','USART, a byte-oriented 2-wire sequential','interface, SPI serial port, 6-channel 10-bit A/D','converter (8-channels in TQFP and QFN/MLF','packages), programmable watchdog timer with','internal oscillator, and five software selectable','power saving modes.'];

define('chip-page', `
  :host{display:block}
  svg{display:block;width:100%;height:281px;background:#fff}
  .h{font:bold 20px "Liberation Serif",serif;fill:#3f6797;text-decoration:underline}
  .pin{font:9px "Liberation Serif",serif;fill:#222}
  .body{font:9px "Open Sans",sans-serif;fill:#111}
  .scan{font:bold 14px "Liberation Serif",serif;fill:#000}
`, `<svg viewBox="0 0 597 843">
  <text class="h" x="172" y="225">Atmega328P Microcontroller</text>
  <path d="M44 303l154 40v28l-10 4L40 331z" fill="#26221f"/><path d="M44 303l154 40-2 6L42 310z" fill="#46413b"/>
  <path d="M42 332v12M52 336v12M62 339v12M73 342v12M84 345v12M95 348v12M106 351v12M117 354v12M128 358v12M139 361v12M150 364v12M161 367v12M172 370v12M183 373v12" stroke="#9c8478" stroke-width="3"/>
  <path d="M66 309l56-13" stroke="#d4a3ab" stroke-width="2"/><path d="M324 604c14-20 30-10 12 4s10-4 24-14M340 370l90-42" stroke="#f2dcde" stroke-width="3" fill="none"/>
  <rect x="354" y="328" width="85" height="246" fill="none" stroke="#333" stroke-width="2.500"/>
  <path d="M385 329c4 12 18 12 24 0" fill="none" stroke="#333" stroke-width="2"/>
  <text class="pin" x="369" y="317">28pin PDIP</text><text class="pin" x="362" y="587">Atmega 328P</text>
  ${leftPins.map((t, i) => `<text class="pin" x="342" y="${350 + i * 16.600}" text-anchor="end">${t}</text><rect x="344" y="${340 + i * 16.600}" width="9" height="11" fill="none" stroke="#333" stroke-width="2"/><text class="pin" x="360" y="${350 + i * 16.600}">${i + 1}</text>`).join('')}
  ${rightPins.map((t, i) => `<text class="pin" x="453" y="${350 + i * 16.600}">${t}</text><rect x="440" y="${340 + i * 16.600}" width="9" height="11" fill="none" stroke="#333" stroke-width="2"/><text class="pin" x="434" y="${350 + i * 16.600}" text-anchor="end">${28 - i}</text>`).join('')}
  ${blurb.map((t, i) => `<text class="body" x="15" y="${431 + i * 12}">${t}</text>`).join('')}
  <text class="scan" x="414" y="834">Scannedby CamScanner</text>
</svg>`);

define('why-page', `
  :host{display:block}
  svg{display:block;width:100%;height:282px;background:#b2b2b2}
  .h{font:bold 20px "Liberation Serif",serif;fill:#3f6797;text-decoration:underline}
  .li{font:15px Lato,sans-serif;fill:#3f6797}
  .dot{font-size:11px}
  .scan{font:bold 14px "Liberation Serif",serif;fill:#000}
`, `<svg viewBox="0 0 597 846">
  <rect x="1.500" y="161" width="594" height="496" fill="#fdfdfd" stroke="#36425f" stroke-width="3.500"/><path d="M0 160h597" stroke="#36425f" stroke-width="6"/><rect x="576" y="639" width="21" height="20" fill="#36425f"/>
  <text class="h" x="88" y="230">Why Atmega328P Microcontroller ?</text>
  ${[[322,'23 general purpose I/O lines'],[346,'A 6-channel 10-bit ADC (analog input)'],[370,'6 output PWM channels(analog output)'],[394,'A serial programmable USART'],[462,'Easily available in Market'],[486,'Low Cost and easy to use']].map(([y, t]) => `<text class="li dot" x="35" y="${y - 2}">•</text><text class="li" x="58" y="${y}">${t}</text>`).join('')}
  <text class="li dot" x="35" y="416">•</text>
  <text class="li" y="418"><tspan x="58">This</tspan> <tspan x="99">allows</tspan> <tspan x="155">very</tspan> <tspan x="198">fast</tspan> <tspan x="237">start-up</tspan> <tspan x="305">combined</tspan> <tspan x="386">with</tspan> <tspan x="430">low</tspan> <tspan x="468">power</tspan></text>
  <text class="li" x="58" y="438">consumption</text>
  <text class="scan" x="414" y="834">Scannedby CamScanner</text>
</svg>`);

define('thumbnail-panel', `
  :host{display:flex;flex:none;flex-direction:column;width:327px;position:relative;background:#f5f7f9;border-right:2px solid #e0e2ea;padding:0 15px;overflow:hidden}
  ${RESET}
  header{display:flex;align-items:center;justify-content:space-between;height:62px;font-size:14px;color:#3a4a6b;padding:0 8px 2px 0;flex:none}
  header button{display:flex;color:#a9acb3}
  .size{display:flex;align-items:center;height:29px;padding:0 10px 6px 8px;margin-right:1px;border-bottom:1px solid #dfe2e6;flex:none;color:#747d92}
  input{flex:1;min-width:0;height:15px;margin:0 18px 0 20px;appearance:none;background:linear-gradient(90deg,#3f4d70 14%,#cdd2df 14%) center/100% 1px no-repeat}
  input::-webkit-slider-thumb{appearance:none;width:14px;height:14px;border-radius:50%;border:1px solid #3f4d70;background:#f8fafb}
  .list{display:flex;flex-direction:column;align-items:center;padding:29px 19px 0 0}
  .thumb{position:absolute;right:1px;top:344px;width:10px;height:55px;border-radius:5px;background:#e1e4e9}
`, `
  <header>Thumbnail<button aria-label="Close panel"><ui-icon name="close"></ui-icon></button></header>
  <div class="size"><ui-icon name="imgSmall"></ui-icon><input type="range" aria-label="Thumbnail size" min="0" max="100" value="14"><ui-icon name="imgLarge"></ui-icon></div>
  <div class="list">
    <page-thumb number="11"><chip-page></chip-page></page-thumb>
    <page-thumb number="12" current><why-page></why-page></page-thumb>
    <page-thumb></page-thumb>
  </div>
  <span class="thumb"></span>`);

define('slide-page', `
  :host{display:block;width:992px;height:100%;background:#fdfdfd;color:#365f92;box-shadow:0 0 10px rgba(40,50,60,.35)}
  h1{margin:0;padding:89px 0 0 146px;font:bold 33px/40px "Liberation Serif",serif;text-decoration:underline;text-decoration-thickness:3px;text-underline-offset:5px;text-decoration-skip-ink:none}
  ul{list-style:none;margin:0;padding:115px 144px 0 60px;font:25px/33px Lato,sans-serif;font-variant-ligatures:none;text-align:justify}
  li{display:flex;margin-bottom:7px}
  li::before{content:"•";width:37px;flex:none;font-size:18px}
`, `
  <h1>Why Atmega328P Microcontroller ?</h1>
  <ul>
    <li>23 general purpose I/O lines</li>
    <li>A 6-channel 10-bit ADC (analog input)</li>
    <li>6 output PWM channels(analog output)</li>
    <li>A serial programmable USART</li>
    <li>This allows very fast start-up combined with low power consumption</li>
    <li>Easily available in Market</li>
    <li>Low Cost and easy to use</li>
  </ul>`);

define('pdf-viewer', `
  :host{display:flex;flex:1;min-width:0;background:#f4f6f9}
  .canvas{flex:1;display:flex;justify-content:center;overflow:hidden}
  .bar{width:16px;display:flex;flex-direction:column;align-items:center;justify-content:space-between;background:#e9ebf1;padding:11px 0 8px;position:relative}
  .bar span{position:absolute;left:1px;top:304px;width:15px;height:49px;border-radius:7px;background:#d7dae2}
`, `<div class="canvas"><slot></slot></div><div class="bar"><ui-icon name="scrollUp"></ui-icon><span></span><ui-icon name="caret"></ui-icon></div>`);

define('wps-status-bar', `
  :host{display:flex;flex:none;align-items:center;height:36px;background:#f6f7f9;border-top:1px solid #e0e2e6;border-bottom:1px solid #c9cdd9;padding:0 17px;box-sizing:border-box}
  ${RESET}
  i{width:1px;height:18px;background:#dfe1e5;margin:0 10px}
  .nav{display:flex;align-items:center;gap:5px;color:${INK};margin-right:10px}
  .page{width:137px;height:26px;border:1px solid #d3d6db;border-radius:3px;background:#fff;font:inherit;color:inherit;text-align:center;padding:0;margin:0 10px 0 9px}
  .right{display:flex;align-items:center;gap:1px;margin-left:auto;color:${INK}}
  .right i{margin:0 9px}
  .pct{display:flex;align-items:center;gap:7px;margin:0 13px 0 2px}
  .zoom{width:172px;height:16px;margin:0 14px;appearance:none;background:linear-gradient(90deg,#3f4d70 48%,#cdd2df 48%) center/100% 1px no-repeat}
  .zoom::-webkit-slider-thumb{appearance:none;width:16px;height:16px;border-radius:50%;border:1px solid #555;background:#ececec}
  .plain{display:flex}
  .full{display:flex;margin-left:13px}
`, `
  <button class="nav"><ui-icon name="nav"></ui-icon>Navigation</button><i></i>
  <icon-button label="First page"><ui-icon name="first"></ui-icon></icon-button>
  <icon-button label="Previous page"><ui-icon name="prev"></ui-icon></icon-button>
  <input class="page" aria-label="Current page" value="12/30">
  <icon-button label="Next page"><ui-icon name="next"></ui-icon></icon-button>
  <icon-button label="Last page"><ui-icon name="last"></ui-icon></icon-button><i></i>
  <icon-button label="Previous view"><ui-icon name="back"></ui-icon></icon-button>
  <icon-button label="Next view" faint><ui-icon name="fwd"></ui-icon></icon-button>
  <div class="right">
    <icon-button label="Send to phone" soft><ui-icon name="phone"></ui-icon></icon-button>
    <icon-button label="Eye protection"><ui-icon name="eyeSmall"></ui-icon></icon-button><i></i>
    <icon-button label="Continuous" active><ui-icon name="continuous"></ui-icon></icon-button><i></i>
    <icon-button label="Single page" active><ui-icon name="single"></ui-icon></icon-button>
    <icon-button label="Two pages"><ui-icon name="double"></ui-icon></icon-button><i></i>
    <icon-button label="Play"><ui-icon name="play"></ui-icon></icon-button><i></i>
    <icon-button label="Actual size" active><ui-icon name="actual"></ui-icon></icon-button>
    <icon-button label="Fit page"><ui-icon name="fitPage"></ui-icon></icon-button>
    <icon-button label="Fit width"><ui-icon name="fitWidth"></ui-icon></icon-button>
    <button class="pct">100%<ui-icon name="caretSmall"></ui-icon></button>
    <button class="plain" aria-label="Zoom out"><ui-icon name="minus"></ui-icon></button>
    <input class="zoom" type="range" aria-label="Zoom level" min="0" max="100" value="49">
    <button class="plain" aria-label="Zoom in"><ui-icon name="plus"></ui-icon></button>
    <button class="full" aria-label="Full screen"><ui-icon name="expand"></ui-icon></button>
  </div>`);

define('task-app', `
  :host{display:flex}
  ${RESET}
  button{position:relative;display:flex;align-items:center;justify-content:center;width:48px;height:48px;border-radius:4px}
  :host([focused]) button{background:#f1f1f5}
  span{position:absolute;bottom:0;left:20px;width:8px;height:4px;border-radius:2px;background:#85868a;display:none}
  :host([running]) span{display:block}
  :host([focused]) span{display:block;left:14px;width:20px;background:#0a78d6}
`, `<button><slot></slot><span></span></button>`, function (root) {
  root.querySelector('button').setAttribute('aria-label', this.getAttribute('label'));
});

define('win-taskbar', `
  :host{display:grid;flex:none;grid-template-columns:1fr auto 1fr;align-items:center;height:59px;color:#1c1c1c;
    background:linear-gradient(90deg,#d4d9ea 0,#dadbe9 7%,#e6ded8 10.500%,#dfdde1 14%,#d6dcea 20%,#e2eadd 26%,#dcebe1 33%,#d8deea 38%,#e0e9df 43%,#e1e9dd 52%,#e8e3d2 57%,#e3e1dc 60%,#d9dbea 64%,#d7dbe8 100%)}
  ${RESET}
  .apps{grid-column:2;display:flex;gap:7px;padding-left:2px}
  .tray{display:flex;align-items:center;justify-content:flex-end;padding-right:25px}
  .tray button{display:flex;justify-content:center;width:30px}
  .sys{display:flex;align-items:center;margin:0 16px 0 5px}
  .clock{text-align:right;font-size:14px;line-height:20px;margin-right:15px}
  .count{display:block;width:20px;height:20px;line-height:20px;border-radius:10px;background:#0a78d6;color:#fff;text-align:center}
`, `
  <div class="apps">
    <task-app label="Start"><ui-icon name="start"></ui-icon></task-app>
    <task-app label="Search"><ui-icon name="taskSearch"></ui-icon></task-app>
    <task-app label="Task view"><ui-icon name="taskView"></ui-icon></task-app>
    <task-app label="Widgets"><ui-icon name="widgets"></ui-icon></task-app>
    <task-app label="Chat"><ui-icon name="teamsChat"></ui-icon></task-app>
    <task-app label="File Explorer" running><ui-icon name="folder"></ui-icon></task-app>
    <task-app label="MySQL" running><ui-icon name="elephant"></ui-icon></task-app>
    <task-app label="Visual Studio Code"><ui-icon name="vscode"></ui-icon></task-app>
    <task-app label="Chrome" running><ui-icon name="chrome"></ui-icon></task-app>
    <task-app label="WPS Office" focused><ui-icon name="wps"></ui-icon></task-app>
    <task-app label="Photos" running><ui-icon name="photos"></ui-icon></task-app>
  </div>
  <div class="tray">
    <button aria-label="Hidden icons"><ui-icon name="trayUp"></ui-icon></button>
    <button aria-label="Teams"><ui-icon name="trayTeams"></ui-icon></button>
    <button aria-label="People"><ui-icon name="trayPeople"></ui-icon></button>
    <button aria-label="Graphics"><ui-icon name="nvidia"></ui-icon></button>
    <button aria-label="Bluetooth"><ui-icon name="bluetooth"></ui-icon></button>
    <button aria-label="Security"><ui-icon name="shield"></ui-icon></button>
    <button aria-label="Printer"><ui-icon name="trayPrinter"></ui-icon></button>
    <div class="sys"><button aria-label="Network"><ui-icon name="wifi"></ui-icon></button><button aria-label="Volume"><ui-icon name="sound"></ui-icon></button><button aria-label="Battery"><ui-icon name="battery"></ui-icon></button></div>
    <div class="clock">10:41<br>22-01-2022</div>
    <span class="count">2</span>
  </div>`);

define('wps-window', `
  :host{display:flex;flex-direction:column;height:100vh}
  main{display:flex;flex:1 1 0;min-height:0;overflow:hidden}
`, `
  <wps-title-bar></wps-title-bar>
  <wps-menu-bar></wps-menu-bar>
  <wps-tool-bar></wps-tool-bar>
  <main>
    <side-rail></side-rail>
    <thumbnail-panel></thumbnail-panel>
    <pdf-viewer><slide-page></slide-page></pdf-viewer>
    <tool-rail></tool-rail>
  </main>
  <wps-status-bar></wps-status-bar>
  <win-taskbar></win-taskbar>`);
</script>
</body>
</html>
